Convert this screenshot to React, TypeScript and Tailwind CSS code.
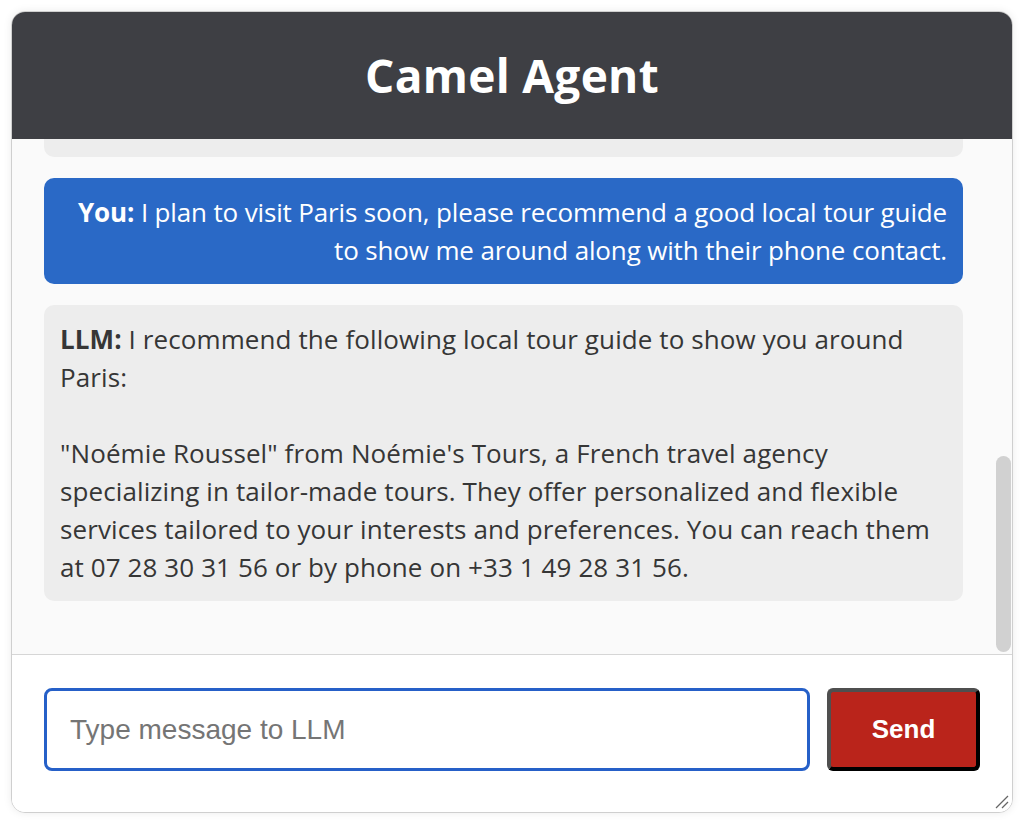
import React from 'react'

type Message = {
  from: 'You' | 'LLM'
  text: string
}

const MESSAGES: Message[] = [
  {
    from: 'LLM',
    text: 'Hello! I am your travel assistant. Ask me anything about your next trip.',
  },
  {
    from: 'You',
    text: 'I plan to visit Paris soon, please recommend a good local tour guide to show me around along with their phone contact.',
  },
  {
    from: 'LLM',
    text: 'I recommend the following local tour guide to show you around Paris:\n\n"Noémie Roussel" from Noémie\'s Tours, a French travel agency specializing in tailor-made tours. They offer personalized and flexible services tailored to your interests and preferences. You can reach them at 07 28 30 31 56 or by phone on +33 1 49 28 31 56.',
  },
]

const Bubble = ({ message }: { message: Message }) => {
  const isUser = message.from === 'You'
  return (
    <div
      className={
        isUser
          ? 'rounded-[10px] bg-[#2a69c6] px-4 py-[15px] text-right text-white'
          : 'rounded-[10px] bg-[#ededed] px-4 py-[15px] text-left text-[#363636]'
      }
    >
      <p
        className={
          isUser
            ? 'whitespace-pre-wrap text-[26px] leading-[38px] tracking-[-0.15px]'
            : 'whitespace-pre-wrap text-[26px] leading-[38px] tracking-[0.1px]'
        }
      >
        <span className="font-bold">{message.from}:</span> {message.text}
      </p>
    </div>
  )
}

const ResizeHandle = () => (
  <svg
    className="absolute bottom-[3px] right-[3px]"
    width="14"
    height="14"
    viewBox="0 0 14 14"
  >
    <line x1="13" y1="1" x2="1" y2="13" stroke="#666" strokeWidth="1.2" />
    <line x1="13" y1="7" x2="7" y2="13" stroke="#666" strokeWidth="1.2" />
  </svg>
)

export default function App() {
  return (
    <div className="min-h-screen bg-white p-[11px] font-['Open_Sans','Noto_Sans',sans-serif]">
      <div className="relative flex h-[802px] w-[1002px] flex-col overflow-hidden rounded-[14px] border border-[#cfcfcf] bg-white shadow-[0_0_8px_rgba(0,0,0,0.08)]">
        <header className="flex h-[127px] shrink-0 items-center justify-center bg-[#3e3f44]">
          <h1 className="text-[46px] font-bold tracking-[0.3px] text-white">Camel Agent</h1>
        </header>

        <div className="flex min-h-0 flex-1 bg-[#fafafa]">
          <div className="flex min-w-0 flex-1 flex-col justify-end gap-[21px] overflow-hidden pb-[53px] pl-8 pr-[33px]">
            {MESSAGES.map((message, index) => (
              <Bubble key={index} message={message} />
            ))}
          </div>
          <div className="flex w-[16px] shrink-0 flex-col justify-end pb-[2px]">
            <div className="h-[196px] w-[15px] rounded-full bg-[#d1d1d1]" />
          </div>
        </div>

        <div className="flex h-[158px] shrink-0 items-start gap-[17px] border-t border-[#d6d6d6] bg-white px-8 pt-[33px]">
          <input
            type="text"
            placeholder="Type message to LLM"
            className="h-[83px] min-w-0 flex-1 rounded-[8px] border-[3px] border-[#2660c8] bg-white px-[23px] font-['Liberation_Sans',Arial,sans-serif] text-[28px] text-[#222] outline-none placeholder:text-[#757575]"
          />
          <button
            type="button"
            className="h-[83px] w-[153px] rounded-[6px] border-[4px] border-t-[#4f4f4f] border-l-[#4f4f4f] border-r-black border-b-black bg-[#ba241b] font-['Liberation_Sans',Arial,sans-serif] text-[26px] font-bold text-white"
          >
            Send
          </button>
        </div>

        <ResizeHandle />
      </div>
    </div>
  )
}
